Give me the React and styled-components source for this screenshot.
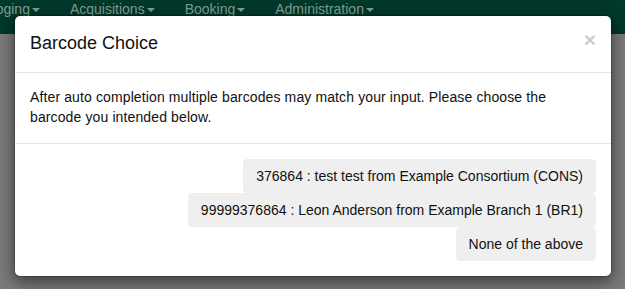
import React from "react";
import styled, { createGlobalStyle } from "styled-components";

const Global = createGlobalStyle`
  html, body { margin: 0; padding: 0; }
  body {
    width: 625px;
    height: 289px;
    overflow: hidden;
    background: #7a7a7a;
    font-family: "Liberation Sans", Arial, sans-serif;
    font-size: 14px;
    line-height: 1.42857;
    color: #333;
  }
  * { box-sizing: border-box; }
`;

const Page = styled.div`
  position: relative;
  width: 625px;
  height: 289px;
  overflow: hidden;
`;

const Navbar = styled.nav`
  height: 34px;
  background: #00382a;
  overflow: hidden;
`;

const NavList = styled.ul`
  display: flex;
  list-style: none;
  margin: 0 0 0 -52px;
  padding: 0;
`;

const NavItem = styled.li`
  padding: 0 15px;
  line-height: 18px;
  font-size: 14px;
  color: #819e93;
  white-space: nowrap;
`;

const Caret = styled.span`
  display: inline-block;
  width: 0;
  height: 0;
  margin-left: 2px;
  vertical-align: middle;
  border-top: 4px solid #819e93;
  border-left: 4px solid transparent;
  border-right: 4px solid transparent;
`;

const ModalLayer = styled.div`
  position: absolute;
  inset: 0;
`;

const Dialog = styled.div`
  margin: 15px 13px 0 14px;
  background: #fff;
  border: 1px solid rgba(0, 0, 0, 0.2);
  border-radius: 6px;
  box-shadow: 0 5px 15px rgba(0, 0, 0, 0.5);
  background-clip: padding-box;
`;

const Header = styled.div`
  display: flex;
  align-items: flex-start;
  justify-content: space-between;
  padding: 15px;
  border-bottom: 1px solid #e5e5e5;
`;

const Title = styled.h4`
  margin: 0;
  font-size: 18px;
  font-weight: 500;
  line-height: 1.42857;
  color: #111;
`;

const Close = styled.button`
  margin-top: -2px;
  padding: 0;
  border: 0;
  background: transparent;
  font-family: "Liberation Sans", Arial, sans-serif;
  font-size: 21px;
  font-weight: bold;
  line-height: 1;
  color: #000;
  opacity: 0.2;
  cursor: pointer;
`;

const Body = styled.div`
  padding: 15px;
  color: #111;
  letter-spacing: 0.12px;
  border-bottom: 1px solid #e5e5e5;
`;

const Choices = styled.div`
  display: flex;
  flex-direction: column;
  align-items: flex-end;
  padding: 15px;
`;

const Choice = styled.button`
  padding: 6px 12px;
  border: 1px solid #efefef;
  border-radius: 4px;
  background: #efefef;
  font-family: "Liberation Sans", Arial, sans-serif;
  font-size: 14px;
  line-height: 20px;
  color: #111;
  white-space: nowrap;
  cursor: pointer;
`;

const navItems = ["Cataloging", "Acquisitions", "Booking", "Administration"];
const choices = [
  "376864 : test test from Example Consortium (CONS)",
  "99999376864 : Leon Anderson from Example Branch 1 (BR1)",
  "None of the above",
];

export default function App() {
  return (
    <Page>
      <Global />
      <Navbar>
        <NavList>
          {navItems.map((n) => (
            <NavItem key={n}>
              {n}
              <Caret />
            </NavItem>
          ))}
        </NavList>
      </Navbar>
      <ModalLayer>
        <Dialog>
          <Header>
            <Title>Barcode Choice</Title>
            <Close aria-label="Close">×</Close>
          </Header>
          <Body>
            After auto completion multiple barcodes may match your input. Please
            choose the barcode you intended below.
          </Body>
          <Choices>
            {choices.map((c) => (
              <Choice key={c}>{c}</Choice>
            ))}
          </Choices>
        </Dialog>
      </ModalLayer>
    </Page>
  );
}
